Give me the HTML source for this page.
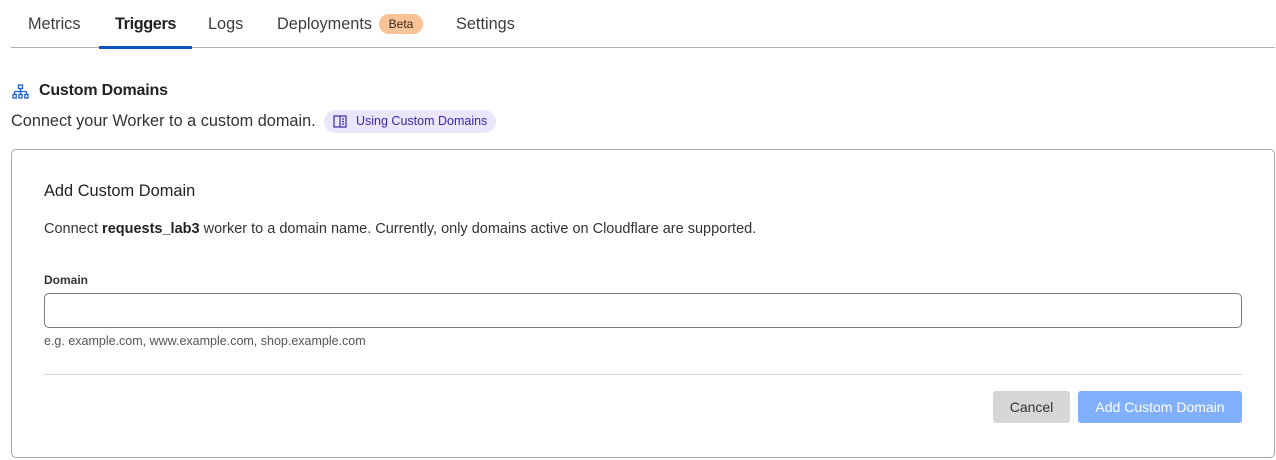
<!DOCTYPE html>
<html><head><style>
*{margin:0;padding:0;box-sizing:border-box}
body{width:1276px;height:460px;background:#fff;font-family:"Liberation Sans",sans-serif;color:#313131;position:relative;overflow:hidden}
.a{position:absolute;white-space:nowrap}
.tab{font-size:16.3px;top:14px;line-height:20px;color:#3c3c3c}
</style></head><body>
<div class="a tab" style="left:28px">Metrics</div>
<div class="a tab" style="left:115px;color:#222;font-weight:bold;letter-spacing:-0.4px">Triggers</div>
<div class="a tab" style="left:208px">Logs</div>
<div class="a tab" style="left:277px">Deployments</div>
<div class="a" style="left:379px;top:14px;width:44px;height:20px;border-radius:10px;background:#f9c297;font-size:12px;line-height:20px;text-align:center;color:#3a2a1c">Beta</div>
<div class="a tab" style="left:456px">Settings</div>
<div class="a" style="left:11px;top:47px;width:1264px;height:1px;background:#b0b0b0"></div>
<div class="a" style="left:99px;top:46px;width:93px;height:3px;background:#0b56c6"></div>
<svg class="a" style="left:12px;top:84px" width="17" height="16" viewBox="0 0 17 16" fill="none" stroke="#1f5fd0" stroke-width="1.3"><rect x="6.5" y="1" width="4" height="3.5"/><path d="M8.5 4.5v3M2.5 7.5h12M2.5 7.5v3M8.5 7.5v3M14.5 7.5v3"/><rect x="1" y="10.5" width="3.2" height="3.5"/><rect x="6.9" y="10.5" width="3.2" height="3.5"/><rect x="12.8" y="10.5" width="3.2" height="3.5"/></svg>
<div class="a" style="left:39px;top:82px;font-size:16px;font-weight:bold;color:#222;letter-spacing:-0.2px">Custom Domains</div>
<div class="a" style="left:11px;top:112px;font-size:16.3px;color:#333">Connect your Worker to a custom domain.</div>
<div class="a" style="left:324px;top:110px;width:172px;height:23px;border-radius:12px;background:#ece6fd;font-size:12.5px;line-height:23px;color:#3a2aa8;padding-left:32px">Using Custom Domains</div>
<svg class="a" style="left:333px;top:115px" width="14" height="13" viewBox="0 0 14 13" fill="none" stroke="#3a2aa8" stroke-width="1.2"><rect x="1" y="1" width="12" height="11"/><path d="M7 1v11M9 4h2M9 6.5h2M9 9h2"/></svg>
<div class="a" style="left:11px;top:149px;width:1264px;height:309px;border:1px solid #a8a8a8;border-radius:5px"></div>
<div class="a" style="left:44px;top:182px;font-size:16.4px;color:#222">Add Custom Domain</div>
<div class="a" style="left:44px;top:221px;font-size:14.5px;color:#333">Connect <b style="color:#222">requests_lab3</b> worker to a domain name. Currently, only domains active on Cloudflare are supported.</div>
<div class="a" style="left:44px;top:273px;font-size:12px;font-weight:bold;color:#333">Domain</div>
<div class="a" style="left:44px;top:293px;width:1198px;height:35px;border:1px solid #7a7a7a;border-radius:5px"></div>
<div class="a" style="left:44px;top:334px;font-size:12.5px;color:#555">e.g. example.com, www.example.com, shop.example.com</div>
<div class="a" style="left:44px;top:374px;width:1198px;height:1px;background:#d8d8d8"></div>
<div class="a" style="left:993px;top:391px;width:77px;height:32px;border-radius:3px;background:#d6d6d6;font-size:14px;line-height:32px;text-align:center;color:#333">Cancel</div>
<div class="a" style="left:1078px;top:391px;width:164px;height:32px;border-radius:3px;background:#80b0fb;font-size:14px;line-height:32px;text-align:center;color:#fff">Add Custom Domain</div>
</body></html>
